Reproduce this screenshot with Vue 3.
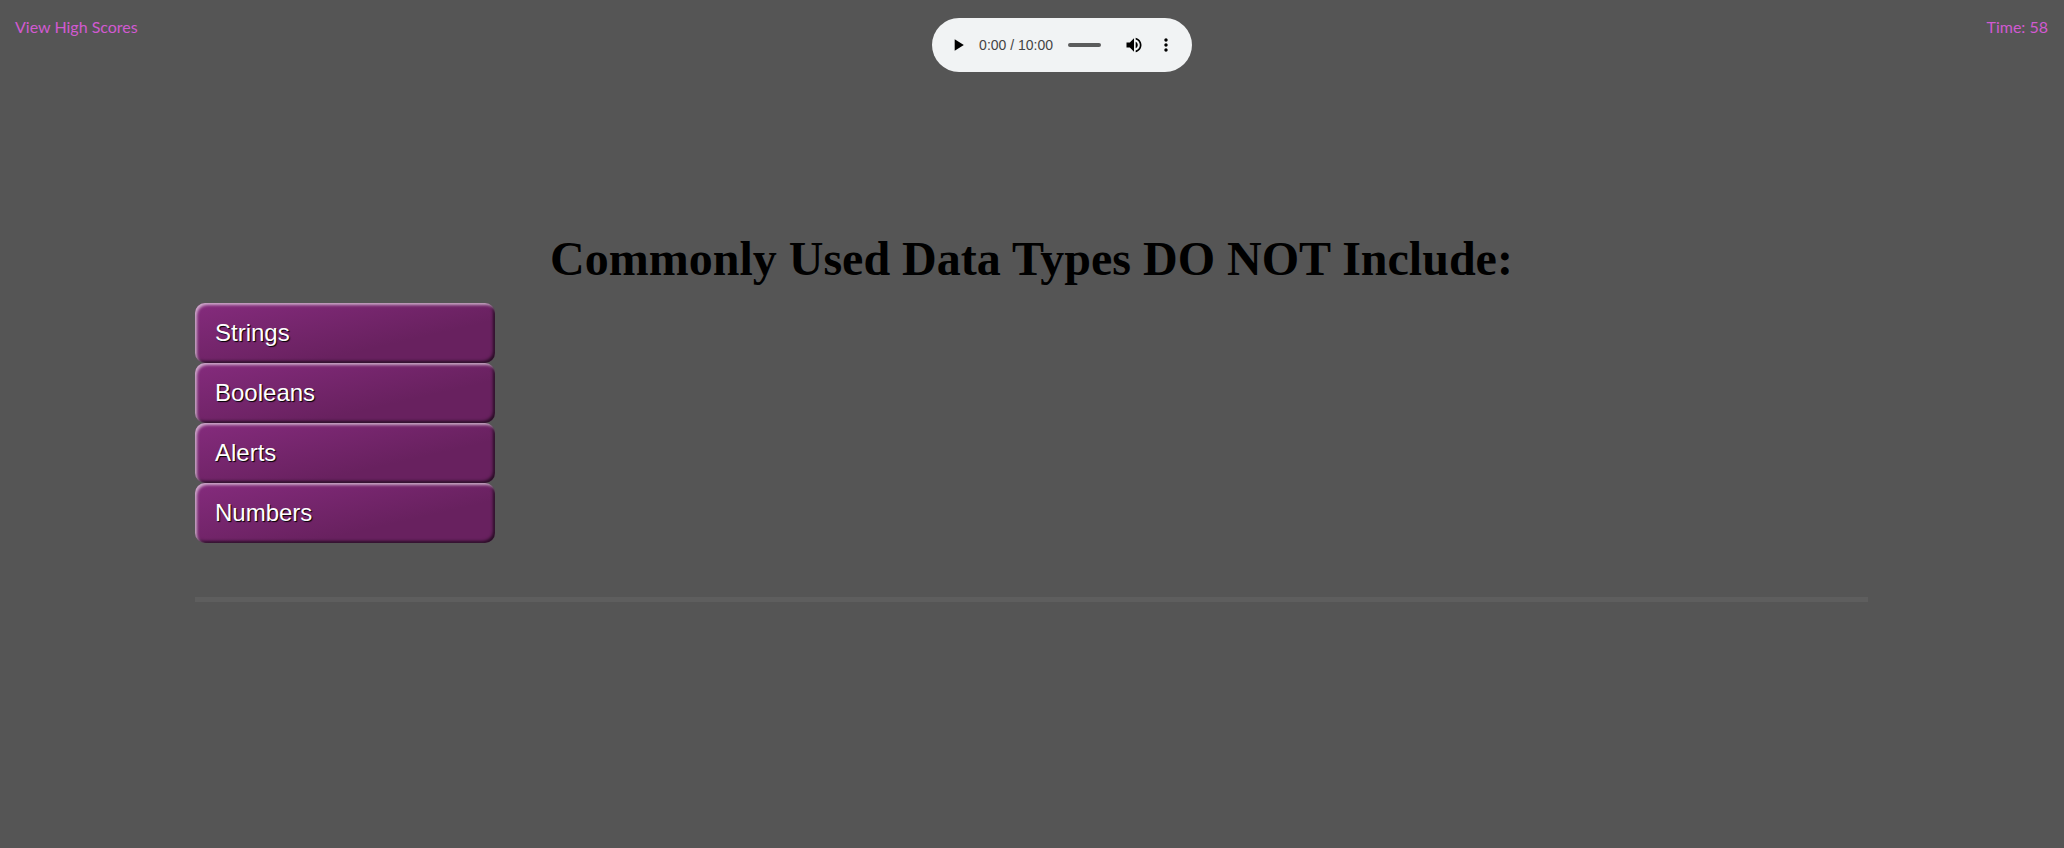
<script setup>
import { ref } from 'vue'

const question = 'Commonly Used Data Types DO NOT Include:'
const choices = ['Strings', 'Booleans', 'Alerts', 'Numbers']
const timeLeft = ref(58)
const position = ref(0)
</script>

<template>
  <div class="page">
    <header class="topbar">
      <a class="scores" href="#scores">View High Scores</a>
      <div class="player" role="group" aria-label="Background music">
        <button class="control" type="button" aria-label="Play">
          <svg viewBox="0 0 24 24" width="20" height="20"><path d="M8 5v14l11-7z" /></svg>
        </button>
        <span class="clock">0:00 / 10:00</span>
        <input v-model="position" class="seek" type="range" min="0" max="600" aria-label="Seek" />
        <button class="control" type="button" aria-label="Mute">
          <svg viewBox="0 0 24 24" width="20" height="20">
            <path d="M3 9v6h4l5 5V4L7 9H3zm13.500 3c0-1.770-1.020-3.290-2.500-4.030v8.050c1.480-.73 2.500-2.250 2.500-4.020zM14 3.230v2.060c2.890.86 5 3.540 5 6.710s-2.110 5.850-5 6.710v2.060c4.010-.91 7-4.490 7-8.770s-2.990-7.860-7-8.770z" />
          </svg>
        </button>
        <button class="control" type="button" aria-label="More options">
          <svg viewBox="0 0 24 24" width="20" height="20">
            <path d="M12 8c1.100 0 2-.9 2-2s-.9-2-2-2-2 .9-2 2 .9 2 2 2zm0 2c-1.100 0-2 .9-2 2s.9 2 2 2 2-.9 2-2-.9-2-2-2zm0 6c-1.100 0-2 .9-2 2s.9 2 2 2 2-.9 2-2-.9-2-2-2z" />
          </svg>
        </button>
      </div>
      <div class="timer">Time: {{ timeLeft }}</div>
    </header>

    <main class="quiz">
      <h1 class="question">{{ question }}</h1>
      <ul class="choices">
        <li v-for="choice in choices" :key="choice">
          <button class="choice" type="button">{{ choice }}</button>
        </li>
      </ul>
      <hr class="divider" />
    </main>
  </div>
</template>

<style>
body {
  margin: 0;
  background: #555;
}
</style>

<style scoped>
.page {
  min-height: 100vh;
  background: #555;
}
.topbar {
  display: flex;
  justify-content: space-between;
  align-items: flex-start;
  padding: 18px 16px 0 15px;
  color: #d15ad1;
  font: 16px/17px "Trebuchet MS", Lato, sans-serif;
}
.scores {
  color: inherit;
  text-decoration: none;
}
.player {
  display: flex;
  align-items: center;
  box-sizing: border-box;
  width: 260px;
  height: 54px;
  padding: 0 10px;
  border-radius: 27px;
  background: #f1f3f4;
}
.control {
  display: flex;
  flex: none;
  align-items: center;
  justify-content: center;
  width: 32px;
  height: 32px;
  padding: 0;
  border: 0;
  background: none;
  color: #000;
}
.control svg {
  fill: currentColor;
}
.clock {
  flex: none;
  margin-left: 5px;
  color: #444;
  font: 14px/20px "Liberation Sans", Arial, sans-serif;
  white-space: nowrap;
}
.seek {
  flex: 1;
  min-width: 0;
  height: 4px;
  margin: 0 17px 0 15px;
  appearance: none;
  border-radius: 2px;
  background: #5b5c5c;
}
.seek::-webkit-slider-thumb {
  appearance: none;
  width: 0;
  height: 0;
}
.quiz {
  margin: 0 196px 0 195px;
  padding-top: 159px;
}
.question {
  margin: 0 0 17px;
  color: #000;
  font: bold 48px/55px "Liberation Serif", "Times New Roman", serif;
  text-align: center;
}
.choices {
  margin: 0;
  padding: 0;
  list-style: none;
}
.choice {
  display: block;
  width: 300px;
  height: 60px;
  padding: 0 20px;
  border: 0;
  border-radius: 10px;
  background: linear-gradient(167deg, #852b7d 0%, #68215f 67%);
  box-shadow: inset 2px 2px 3px rgba(255, 255, 255, 0.6), inset -2px -2px 3px rgba(0, 0, 0, 0.6);
  color: #fff;
  font: 24px/28px "Liberation Sans", Arial, sans-serif;
  text-align: left;
  text-shadow: 1px 1px 1px #000;
}
.divider {
  height: 5px;
  margin: 54px 0 0;
  border: 0;
  background: #5e5e5e;
}
</style>
